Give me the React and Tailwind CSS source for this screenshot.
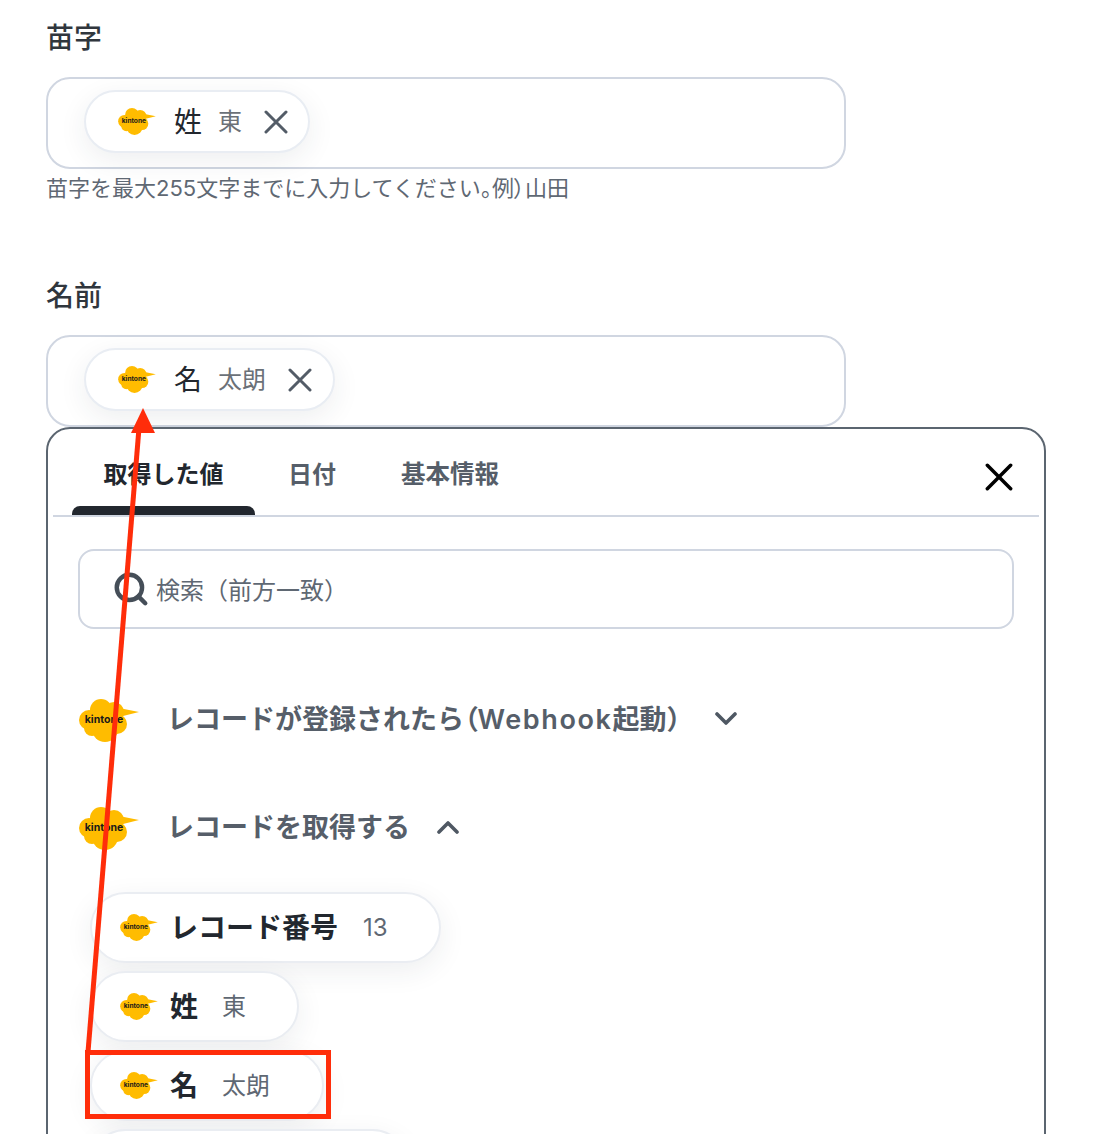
import React from 'react';
import { Search } from 'lucide-react';

function KintoneLogo({ className }) {
  return (
    <svg viewBox="0 0 60 43" className={className}>
      <g fill="#ffbc00">
        <circle cx="10" cy="21" r="10" />
        <circle cx="22" cy="11" r="11" />
        <circle cx="35" cy="13" r="10" />
        <circle cx="26" cy="30" r="13" />
        <circle cx="38" cy="25" r="10" />
        <circle cx="13" cy="29" r="8" />
        <path d="M40 9L60 13L44 17Z" />
      </g>
      <text x="25" y="23.5" textAnchor="middle" fontSize="10.5" fontWeight="700" fontFamily="Inter, sans-serif" fill="#1a1a1a">
        kintone
      </text>
    </svg>
  );
}

function CloseIcon({ className, strokeWidth = 3 }) {
  return (
    <svg viewBox="0 0 24 24" fill="none" stroke="currentColor" strokeWidth={strokeWidth} strokeLinecap="round" className={className}>
      <path d="M2 2L22 22M22 2L2 22" />
    </svg>
  );
}

function Chevron({ up, className }) {
  return (
    <svg viewBox="0 0 24 14" fill="none" stroke="currentColor" strokeWidth="3.6" strokeLinecap="round" strokeLinejoin="round" className={className}>
      <path d={up ? 'M3 12L12 3L21 12' : 'M3 2L12 11L21 2'} />
    </svg>
  );
}

function InputChip({ name, value, width }) {
  return (
    <div className={`flex h-[63px] items-center rounded-full border-2 border-[#e9edf3] bg-white pl-[32px] shadow-[0_8px_28px_rgba(40,50,60,0.08)] ${width}`}>
      <KintoneLogo className="h-[27px] w-[38px] shrink-0" />
      <span className="ml-[18px] text-[28px] leading-none text-[#22272e]">{name}</span>
      <span className="ml-[16px] text-[24px] leading-none text-[#6b7178]">{value}</span>
      <CloseIcon className="ml-[22px] h-[24px] w-[24px] text-[#535c67]" />
    </div>
  );
}

function ListChip({ name, value, width, valueGap }) {
  return (
    <div className={`flex h-[71px] shrink-0 items-center rounded-full border-2 border-[#eaedf2] bg-white pl-[28px] shadow-[0_8px_28px_rgba(40,50,60,0.08)] ${width}`}>
      <KintoneLogo className="h-[27px] w-[38px] shrink-0" />
      <span className="ml-[12px] text-[28px] font-bold leading-none text-[#22272e]">{name}</span>
      <span className={`${valueGap} text-[24px] leading-none text-[#5f6873]`}>{value}</span>
    </div>
  );
}

function GroupHeader({ children, open, chevronGap }) {
  return (
    <div className="flex h-[48px] items-center">
      <KintoneLogo className="mt-[2px] h-[43px] w-[60px] shrink-0" />
      <span className="ml-[28px] text-[27px] font-semibold leading-none text-[#565e69]">{children}</span>
      <Chevron up={open} className={`${chevronGap} h-[14px] w-[24px] text-[#4f5863]`} />
    </div>
  );
}

function Field({ label, chip, hint }) {
  return (
    <div>
      <div className="text-[28px] font-medium leading-[36px] text-[#30363d]">{label}</div>
      <div className="mt-[21px] h-[92px] w-[800px] rounded-[24px] border-2 border-[#d0d6e1] bg-white pl-[36px] pt-[11px]">{chip}</div>
      {hint && <div className="mt-[5px] text-[22px] leading-[28px] text-[#5f6873]">{hint}</div>}
    </div>
  );
}

export default function App() {
  return (
    <div className="relative h-[1134px] w-[1110px] overflow-hidden bg-white font-['Inter','Noto_Sans_CJK_JP',sans-serif]">
      <div className="px-[46px] pt-[20px]">
        <Field
          label="苗字"
          chip={<InputChip name="姓" value="東" width="w-[226px]" />}
          hint={
            <>
              苗字を最大255文字までに入力してください<span className="[font-feature-settings:'palt']">。</span>例<span className="[font-feature-settings:'palt']">）</span>山田
            </>
          }
        />
        <div className="mt-[76px]">
          <Field label="名前" chip={<InputChip name="名" value="太朗" width="w-[251px]" />} />
        </div>

        <div className="h-[800px] w-[1000px] rounded-[24px] border-2 border-[#5b6570] bg-white px-[5px]">
          {/* tabs */}
          <div className="relative flex h-[88px] items-start border-b-2 border-[#d0d6e1] pl-[19px] pt-[29px]">
            <div className="relative h-[57px] w-[183px] text-center text-[24px] font-bold leading-[34px] text-[#22272e]">
              取得した値
              <div className="absolute bottom-0 left-0 h-[9px] w-full rounded-t-[8px] bg-[#22272e]" />
            </div>
            <div className="ml-[33px] text-[24px] font-semibold leading-[33px] text-[#565e69]">日付</div>
            <div className="ml-[65px] text-[24.5px] font-semibold leading-[33px] text-[#565e69]">基本情報</div>
            <CloseIcon className="absolute right-[25px] top-[34px] h-[28px] w-[30px] text-black" strokeWidth={3} />
          </div>

          {/* search */}
          <div className="mx-[25px] mt-[32px] flex h-[80px] w-[936px] items-center rounded-[16px] border-2 border-[#d0d6e1] pl-[32px]">
            <Search className="h-[38px] w-[38px] text-[#454e58]" strokeWidth={2.8} />
            <span className="ml-[6px] pt-[3px] text-[24px] text-[#5f6873]">検索（前方一致）</span>
          </div>

          {/* groups */}
          <div className="ml-[26px] mt-[66px]">
            <GroupHeader chevronGap="ml-[21px]">
              レコードが登録されたら<span className="[font-feature-settings:'palt']">（</span><span className="tracking-[1.6px]">Webhook</span>起動）
            </GroupHeader>
            <div className="mt-[60px]">
              <GroupHeader open chevronGap="ml-[26px]">レコードを取得する</GroupHeader>
            </div>
            <div className="ml-[11px] mt-[41px] flex flex-col gap-[8px]">
              <ListChip name="レコード番号" value="13" width="w-[351px]" valueGap="ml-[25px]" />
              <ListChip name="姓" value="東" width="w-[209px]" valueGap="ml-[24px]" />
              <ListChip name="名" value="太朗" width="w-[234px]" valueGap="ml-[24px]" />
              <div className="h-[71px] w-[318px] shrink-0 rounded-full border-2 border-[#eaedf2] bg-white shadow-[0_8px_28px_rgba(40,50,60,0.08)]" />
            </div>
          </div>
        </div>
      </div>

      {/* red annotation laid over the screenshot */}
      <div className="absolute left-[85px] top-[1050px] h-[69px] w-[246px] border-[5px] border-[#ff2d0a]" />
      <svg className="absolute left-0 top-0 h-[1134px] w-[1110px]" viewBox="0 0 1110 1134" fill="none">
        <path d="M88 1052L139 428" stroke="#ff2d0a" strokeWidth="5" />
        <path d="M143 408L131 433H155Z" fill="#ff2d0a" />
      </svg>
    </div>
  );
}
